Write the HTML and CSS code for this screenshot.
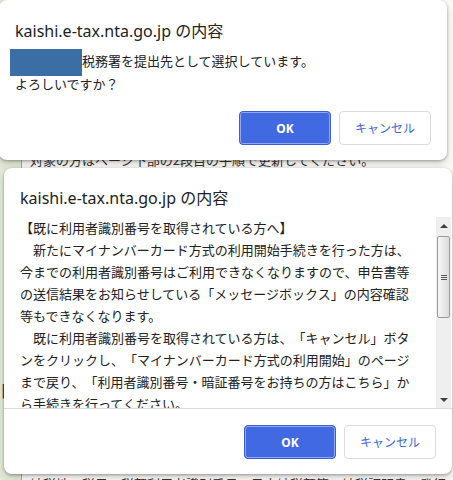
FILE: index.html
```html
<!DOCTYPE html>
<html>
<head>
    <title>kaishi.e-tax.nta.go.jp の内容</title>
    <meta charset="utf-8">
    <meta name="viewport" content="width=device-width, initial-scale=1.0">
    <link rel="stylesheet" href="styles.css">
</head>
<body>
    <!-- page behind the two alerts -->
    <div class="page">
        <div class="page-side">
            <div class="side-mark">日</div>
        </div>
        <div class="page-main">
            <p class="page-line">対象の方はページ下部の2段目の手順で更新してください。</p>
            <p class="page-line last">納税地、税目、税額利用者識別番号、予定納税額等の納税証明書の発行</p>
        </div>
    </div>

    <div class="dialog dialog-confirm">
        <div class="dialog-title">kaishi.e-tax.nta.go.jp の内容</div>
        <p class="message"><span class="redact"></span>税務署を提出先として選択しています。<br>よろしいですか？</p>
        <div class="buttons">
            <button class="btn btn-ok">OK</button>
            <button class="btn btn-cancel">キャンセル</button>
        </div>
    </div>

    <div class="dialog dialog-notice">
        <div class="dialog-title">kaishi.e-tax.nta.go.jp の内容</div>
        <div class="scroll">
            <p class="scroll-text">【既に利用者識別番号を取得されている方へ】<br>　新たにマイナンバーカード方式の利用開始手続きを行った方は、今までの利用者識別番号はご利用できなくなりますので、申告書等の送信結果をお知らせしている「メッセージボックス」の内容確認等もできなくなります。<br>　既に利用者識別番号を取得されている方は、「キャンセル」ボタンをクリックし、「マイナンバーカード方式の利用開始」のページまで戻り、「利用者識別番号・暗証番号をお持ちの方はこちら」から手続きを行ってください。</p>
            <div class="scrollbar">
                <div class="arrow"><span class="tri-up"></span></div>
                <div class="thumb"><span class="grip"></span></div>
                <div class="track"></div>
                <div class="arrow"><span class="tri-down"></span></div>
            </div>
        </div>
        <div class="buttons">
            <button class="btn btn-ok">OK</button>
            <button class="btn btn-cancel">キャンセル</button>
        </div>
    </div>
</body>
</html>
```

FILE: styles.css
```css
body {
    margin: 0;
    height: 480px;
    position: relative;
    overflow: hidden;
    background-color: #f3efe8;
    font-family: "Noto Sans", "Noto Sans CJK JP", sans-serif;
    text-spacing-trim: space-all;
}

/* background page */
.page {
    display: flex;
    min-height: 480px;
}

.page-side {
    width: 21px;
    background-color: #e3ebd7;
    border-right: 1px solid #a9b27e;
}

.side-mark {
    margin-top: 378px;
    font-family: "Noto Sans CJK JP", sans-serif;
    font-size: 16px;
    color: #3c1f5a;
}

.page-main {
    flex: 1;
    background-color: #fbfaf6;
    padding: 152px 0 0 8px;
    font-family: "Noto Sans CJK JP", sans-serif;
    font-size: 13px;
    color: #333;
}

.page-line {
    margin: 0;
    line-height: 16px;
    white-space: nowrap;
}

.page-line.last {
    margin-top: 308px;
}

/* alert dialogs */
.dialog {
    position: absolute;
    width: 448px;
    box-sizing: border-box;
    background-color: #fff;
    border-radius: 8px;
    box-shadow: 0 1px 3px rgba(0,0,0,0.3), 0 4px 8px rgba(0,0,0,0.15);
    color: #202124;
}

.dialog-confirm {
    left: -1px;
    top: 0;
    padding: 20px 16px 15px;
}

.dialog-notice {
    left: 4px;
    top: 168px;
    padding: 19px 0 15px;
}

.dialog-title {
    font-size: 16px;
    line-height: 22px;
    margin-bottom: 8px;
}

.dialog-notice .dialog-title {
    margin: 0 16px 8px;
}

.message {
    margin: 0;
    font-size: 13px;
    line-height: 22px;
}

.redact {
    display: inline-block;
    width: 72px;
    height: 27px;
    margin: -3px 0 -3px -5px;
    vertical-align: middle;
    background-color: #3b6ea5;
}

.scroll {
    display: flex;
    height: 191px;
    border-bottom: 1px solid #dadce0;
}

.scroll-text {
    flex: 1;
    margin: 0;
    overflow: hidden;
    padding: 0 20px 0 16px;
    font-size: 13px;
    line-height: 22px;
}

.scrollbar {
    width: 15px;
    margin-right: 1px;
    background-color: #efefef;
    display: flex;
    flex-direction: column;
    align-items: center;
}

.arrow {
    height: 17px;
    display: flex;
    align-items: center;
    justify-content: center;
}

.tri-up,
.tri-down {
    width: 0;
    height: 0;
    border-left: 4px solid transparent;
    border-right: 4px solid transparent;
}

.tri-up {
    border-bottom: 4px solid #404040;
}

.tri-down {
    border-top: 4px solid #404040;
}

.thumb {
    margin-top: 2px;
    width: 13px;
    height: 82px;
    box-sizing: border-box;
    border: 1px solid #9c9c9c;
    border-radius: 2px;
    background: linear-gradient(to right, #f6f6f6, #dcdcdc);
    display: flex;
    align-items: center;
    justify-content: center;
}

.grip {
    width: 6px;
    height: 5px;
    background: repeating-linear-gradient(#5a5a5a 0 1px, transparent 1px 2px);
}

.track {
    flex: 1;
}

.buttons {
    display: flex;
    justify-content: flex-end;
    gap: 8px;
    margin-top: 16px;
}

.dialog-notice .buttons {
    margin: 16px 16px 0;
}

.btn {
    width: 92px;
    height: 34px;
    box-sizing: border-box;
    border-radius: 4px;
    font-family: "Noto Sans", "Noto Sans CJK JP", sans-serif;
    font-size: 12px;
    cursor: pointer;
}

.btn-ok {
    background-color: #4169e1;
    color: #fff;
    font-weight: bold;
    border: 1px solid #3a5fd0;
    box-shadow: inset 0 0 0 1px #8fa9f0;
}

.btn-cancel {
    background-color: #fff;
    color: #3d68d8;
    border: 1px solid #dadce0;
}
```
